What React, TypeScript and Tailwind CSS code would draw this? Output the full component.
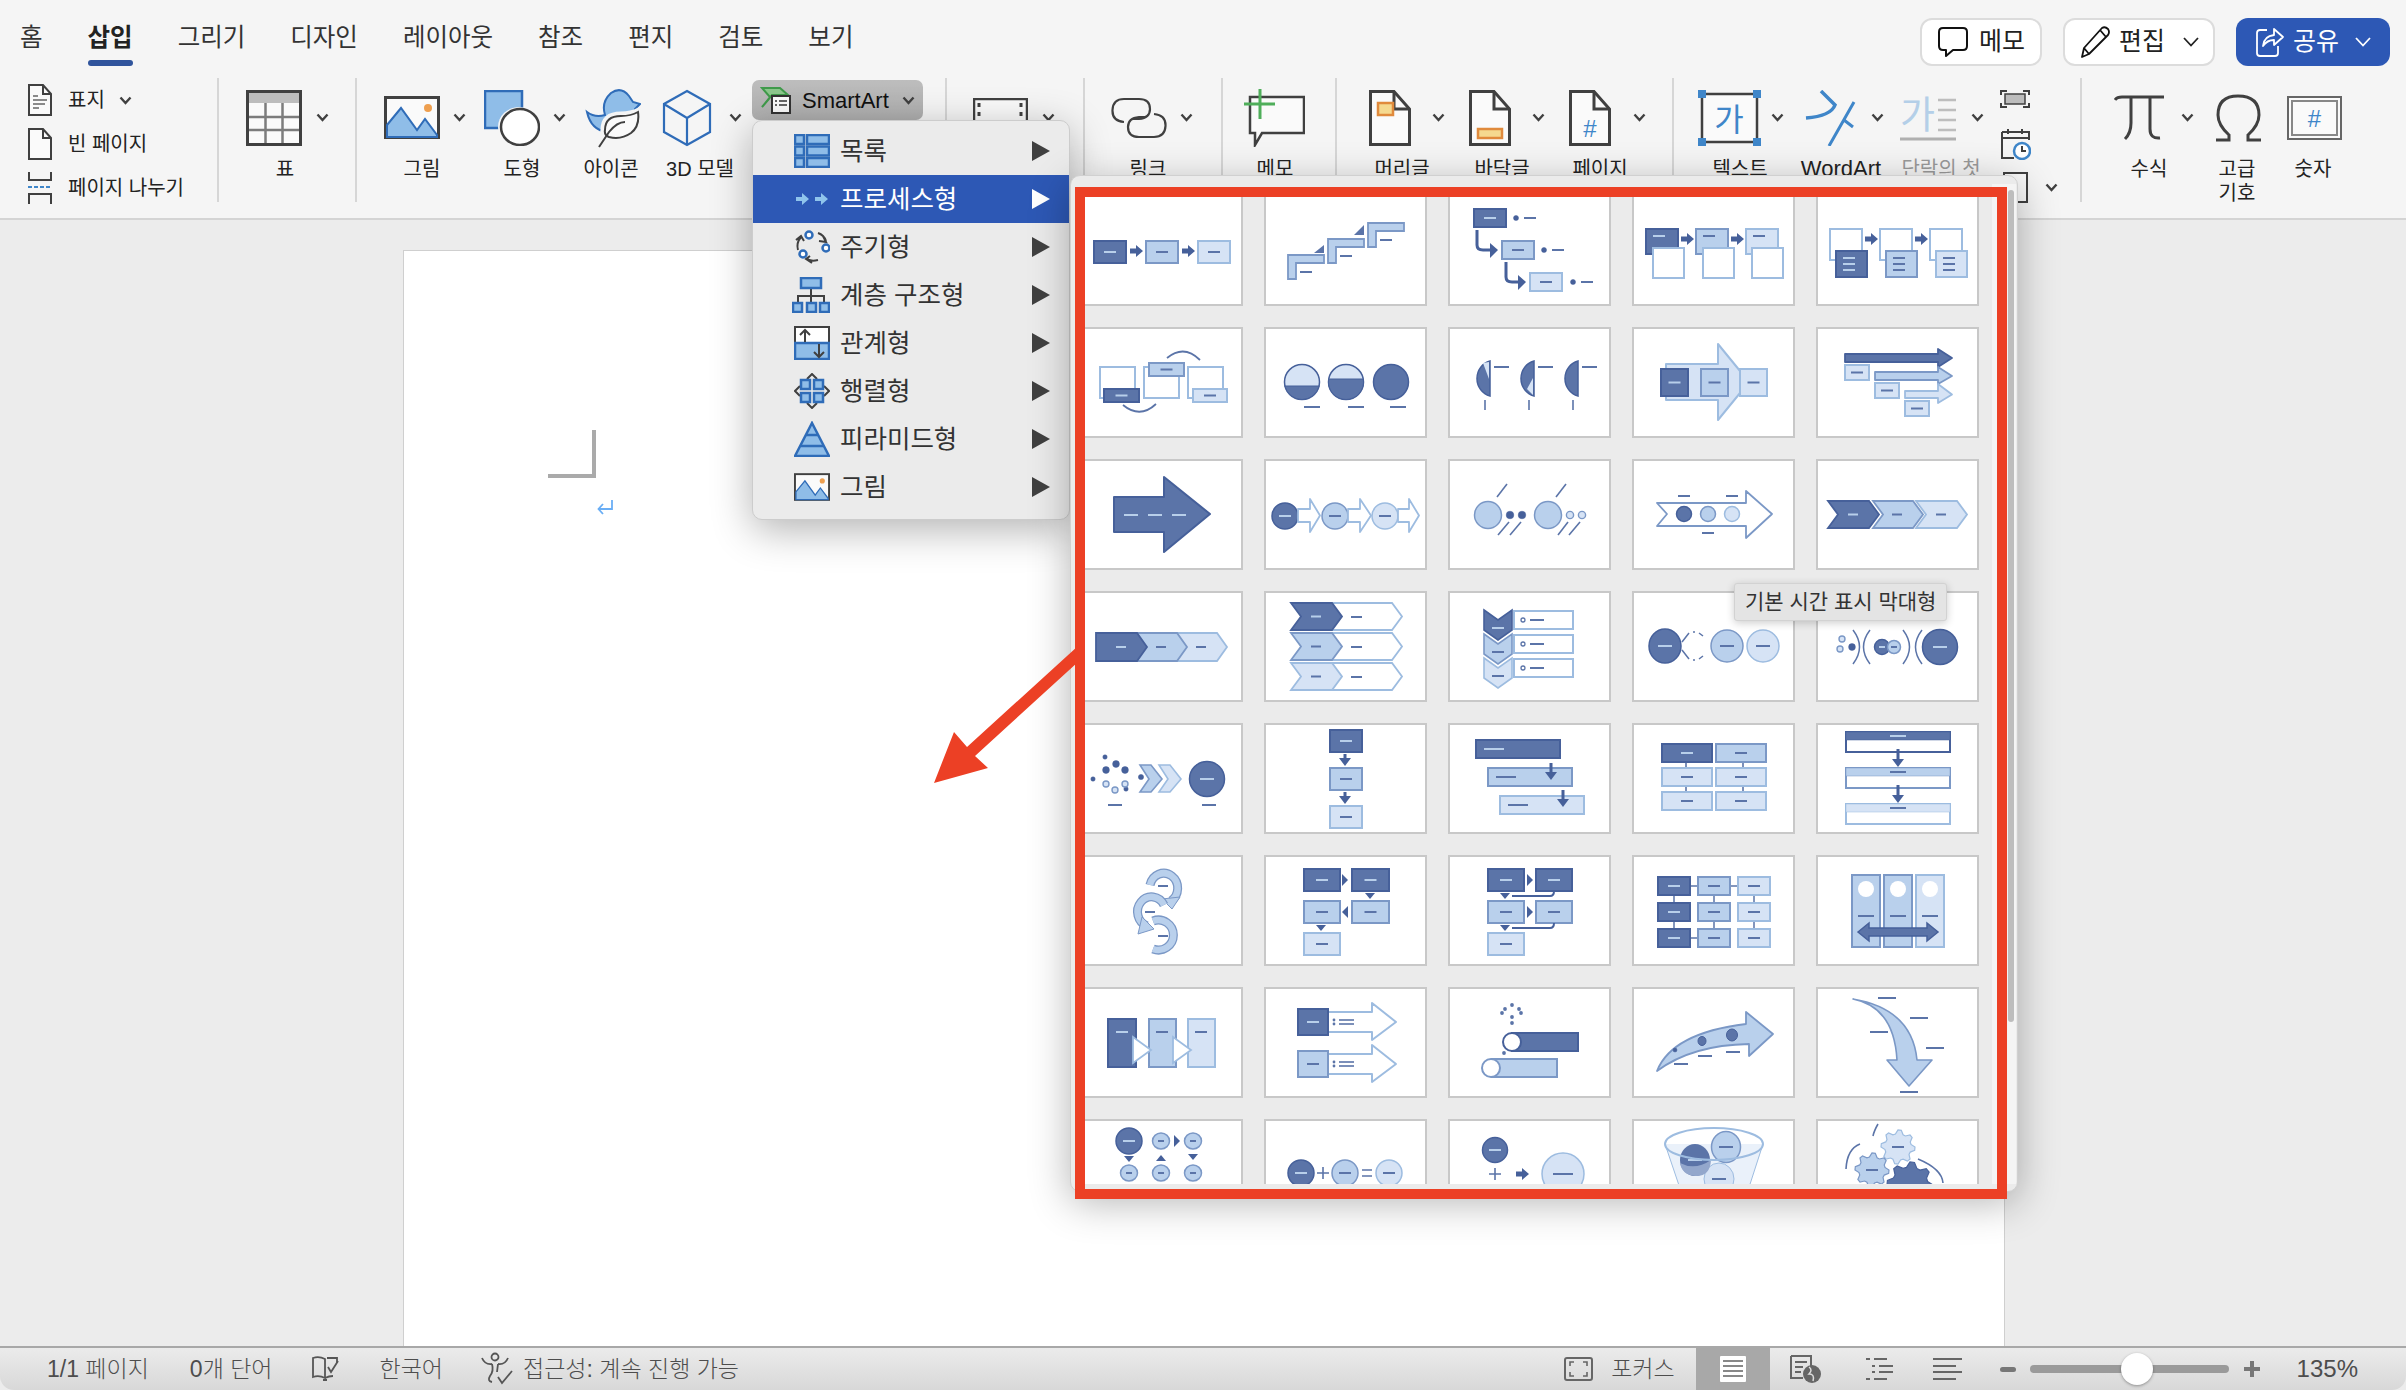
import type { ReactNode } from "react";

const KO = "font-['Liberation_Sans','Noto_Sans_CJK_KR',sans-serif]";

const TONE = [
  { f: "#5b74a8", s: "#46609a", d: "#b8cfea" },
  { f: "#b9d0ec", s: "#7b98c6", d: "#5b74a8" },
  { f: "#d6e3f5", s: "#9dbce0", d: "#5b74a8" },
];
const DARK = "#46609a";
const LINE = "#5b74a8";

const Dash = ({ x, y, w = 12, c = LINE }: { x: number; y: number; w?: number; c?: string }) => (
  <line x1={x} y1={y} x2={x + w} y2={y} stroke={c} strokeWidth="2" />
);

const Box = ({ x, y, w, h, t, dash = true, white = false }: { x: number; y: number; w: number; h: number; t: number; dash?: boolean; white?: boolean }) => (
  <g>
    <rect x={x} y={y} width={w} height={h} fill={white ? "#fff" : TONE[t].f} stroke={TONE[t].s} strokeWidth="2" />
    {dash && <Dash x={x + w / 2 - 6} y={y + h / 2} c={TONE[t].d} />}
  </g>
);

const Ell = ({ cx, cy, r, ry, t, dash = true, w = 12 }: { cx: number; cy: number; r: number; ry?: number; t: number; dash?: boolean; w?: number }) => (
  <g>
    <ellipse cx={cx} cy={cy} rx={r} ry={ry ?? r} fill={TONE[t].f} stroke={TONE[t].s} strokeWidth="1.5" />
    {dash && <Dash x={cx - w / 2} y={cy} w={w} c={TONE[t].d} />}
  </g>
);

const RA = ({ x, y }: { x: number; y: number }) => (
  <path d={`M${x} ${y + 2.5}H${x + 6}V${y - 1}L${x + 13} ${y + 5}L${x + 6} ${y + 11}V${y + 7.5}H${x}Z`} fill={DARK} />
);

const DA = ({ cx, y, h }: { cx: number; y: number; h: number }) => (
  <path d={`M${cx - 1.5} ${y}H${cx + 1.5}V${y + h - 8}H${cx + 6}L${cx} ${y + h}L${cx - 6} ${y + h - 8}H${cx - 1.5}Z`} fill={DARK} />
);

const Chev = ({ x, y, w, h, t, p = 10, notch = true, white = false, dash }: { x: number; y: number; w: number; h: number; t: number; p?: number; notch?: boolean; white?: boolean; dash?: number }) => (
  <g>
    <polygon
      points={`${x},${y} ${x + w - p},${y} ${x + w},${y + h / 2} ${x + w - p},${y + h} ${x},${y + h}${notch ? ` ${x + p},${y + h / 2}` : ""}`}
      fill={white ? "#fff" : TONE[t].f}
      stroke={TONE[t].s}
      strokeWidth="1.8"
    />
    {dash !== undefined && <Dash x={dash} y={y + h / 2} w={10} c={TONE[t].d} />}
  </g>
);

// long block arrow: body y0..y1, head from hx out to tip
const Arr = ({ x, hx, tip, y0, y1, t0, t1, t, white = false, sw = 1.8 }: { x: number; hx: number; tip: number; y0: number; y1: number; t0: number; t1: number; t: number; white?: boolean; sw?: number }) => (
  <polygon
    points={`${x},${y0} ${hx},${y0} ${hx},${t0} ${tip},${(y0 + y1) / 2} ${hx},${t1} ${hx},${y1} ${x},${y1}`}
    fill={white ? "#fff" : TONE[t].f}
    stroke={TONE[t].s}
    strokeWidth={sw}
    strokeLinejoin="round"
  />
);

const seg = (cx: number, cy: number, r: number, yk: number) => {
  const dx = Math.sqrt(r * r - (yk - cy) * (yk - cy));
  return `M${cx - dx} ${yk}A${r} ${r} 0 ${yk < cy ? 1 : 0} 0 ${cx + dx} ${yk}Z`;
};

const Lstep = ({ x, y }: { x: number; y: number }) => (
  <path d={`M${x} ${y}H${x + 36}V${y + 8}H${x + 8}V${y + 24}H${x}Z`} fill={TONE[1].f} stroke={TONE[1].s} strokeWidth="1.8" />
);

const gear = (cx: number, cy: number, r: number, n: number) => {
  const pts: string[] = [];
  for (let i = 0; i < n * 4; i++) {
    const a = (i / (n * 4)) * Math.PI * 2;
    const rr = i % 4 < 2 ? r : r * 0.78;
    pts.push(`${cx + rr * Math.cos(a)},${cy + rr * Math.sin(a)}`);
  }
  return pts.join(" ");
};

const Dot = ({ x, y, r = 2.5, ring = false }: { x: number; y: number; r?: number; ring?: boolean }) => (
  <circle cx={x} cy={y} r={r} fill={ring ? TONE[2].f : DARK} stroke={ring ? TONE[1].s : DARK} strokeWidth={ring ? 1.4 : 0.5} />
);

const Tri = ({ x, y, dir }: { x: number; y: number; dir: "r" | "l" | "u" | "d" }) => {
  const p = {
    r: `${x - 3},${y - 6} ${x + 3},${y} ${x - 3},${y + 6}`,
    l: `${x + 3},${y - 6} ${x - 3},${y} ${x + 3},${y + 6}`,
    u: `${x - 5},${y + 3} ${x + 5},${y + 3} ${x},${y - 3}`,
    d: `${x - 5},${y - 3} ${x + 5},${y - 3} ${x},${y + 3}`,
  }[dir];
  return <polygon points={p} fill={DARK} />;
};

const Ring = ({ cx, cy, a }: { cx: number; cy: number; a: string }) => (
  <g fill="none">
    <path d={a} stroke={TONE[1].s} strokeWidth="9" />
    <path d={a} stroke={TONE[1].f} strokeWidth="6.5" />
    <Dash x={cx - 5} y={cy} w={10} />
  </g>
);

const THUMBS: ReactNode[] = [
  // row 1
  <><Box x={14} y={46} w={32} h={22} t={0} /><RA x={50} y={51} /><Box x={66} y={46} w={32} h={22} t={1} /><RA x={102} y={51} /><Box x={118} y={46} w={32} h={22} t={2} /></>,
  <><Lstep x={24} y={60} /><Lstep x={64} y={44} /><Lstep x={104} y={28} /><polygon points="60,50 60,58 50,58" fill={LINE} /><polygon points="100,30 100,40 90,40" fill={LINE} /><Dash x={36} y={77} /><Dash x={76} y={61} /><Dash x={116} y={45} /></>,
  <><Box x={26} y={14} w={32} h={18} t={0} /><Dot x={68} y={23} /><Dash x={76} y={23} /><Box x={54} y={46} w={32} h={18} t={1} /><Dot x={96} y={55} /><Dash x={104} y={55} /><Box x={82} y={78} w={32} h={18} t={2} /><Dot x={125} y={87} /><Dash x={133} y={87} /><path d="M29 35V50Q29 55 35 55H42" fill="none" stroke={DARK} strokeWidth="3" /><polygon points="42,48 50,55 42,63" fill={DARK} /><path d="M58 67V82Q58 87 64 87H70" fill="none" stroke={DARK} strokeWidth="3" /><polygon points="70,80 78,87 70,95" fill={DARK} /></>,
  <><Box x={14} y={34} w={32} h={25} t={0} dash={false} /><Box x={64} y={34} w={32} h={25} t={1} dash={false} /><Box x={114} y={34} w={32} h={25} t={2} dash={false} /><Box x={21} y={53} w={31} h={30} t={2} white dash={false} /><Box x={71} y={53} w={31} h={30} t={2} white dash={false} /><Box x={120} y={53} w={31} h={30} t={2} white dash={false} /><RA x={49} y={39} /><RA x={99} y={39} /><Dash x={21} y={41} c={TONE[0].d} /><Dash x={71} y={41} /><Dash x={121} y={41} /></>,
  <><Box x={14} y={34} w={32} h={31} t={2} white dash={false} /><Box x={64} y={34} w={32} h={31} t={2} white dash={false} /><Box x={114} y={34} w={32} h={31} t={2} white dash={false} /><RA x={49} y={39} /><RA x={99} y={39} />{[0, 1, 2].map((i) => <g key={i}><Box x={20 + i * 50} y={56} w={31} h={26} t={i} dash={false} />{[63, 69, 75].map((y) => <Dash key={y} x={27 + i * 50} y={y} c={TONE[i].d} />)}</g>)}</>,
  // row 2
  <><Box x={20} y={40} w={35} h={31} t={2} white dash={false} /><Box x={64} y={40} w={35} h={31} t={2} white dash={false} /><Box x={108} y={40} w={35} h={31} t={2} white dash={false} /><Box x={69} y={36} w={35} h={13} t={1} /><Box x={24} y={62} w={35} h={13} t={0} /><Box x={113} y={62} w={34} h={13} t={2} /><path d="M87 31Q104 17 120 33" fill="none" stroke={LINE} strokeWidth="1.8" /><path d="M43 78Q60 92 76 77" fill="none" stroke={LINE} strokeWidth="1.8" /></>,
  <>{[[38, 59], [82, 52]].map(([cx, k]) => <g key={cx}><circle cx={cx} cy={55} r={17.5} fill={TONE[2].f} stroke={TONE[0].s} strokeWidth="1.5" /><path d={seg(cx, 55, 17.5, k)} fill={TONE[0].f} stroke={TONE[0].s} strokeWidth="1" /></g>)}<circle cx={127} cy={55} r={17.5} fill={TONE[0].f} stroke={TONE[0].s} strokeWidth="1.5" /><Dash x={40} y={80} w={16} /><Dash x={84} y={80} w={16} /><Dash x={126} y={80} w={16} /></>,
  <>{[25, 69, 113].map((x, i) => <g key={x}><path d={`M${x + 17} 34A17 18 0 0 0 ${x + 17} 69Z`} fill={TONE[0].f} stroke={TONE[0].s} strokeWidth="1.5" />{i === 0 && <polygon points="35,36 41,35 41,52" fill={TONE[2].f} />}{i === 1 && <polygon points="85,68 85,51 79,62" fill={TONE[2].f} />}<Dash x={x + 21} y={40} w={15} /><line x1={x + 12} y1={73} x2={x + 12} y2={83} stroke={LINE} strokeWidth="1.6" /></g>)}</>,
  <><path d="M34 37H86V17L117 55L86 93V73H34Z" fill={TONE[2].f} stroke={TONE[2].s} strokeWidth="2" strokeLinejoin="round" /><Box x={29} y={42} w={27} h={27} t={0} /><Box x={69} y={42} w={27} h={27} t={1} /><Box x={108} y={42} w={27} h={27} t={2} /></>,
  <><Arr x={29} hx={122} tip={136} y0={27} y1={35} t0={22} t1={40} t={0} /><Box x={29} y={38} w={24} h={15} t={2} /><Arr x={59} hx={122} tip={136} y0={45} y1={53} t0={40} t1={57} t={1} /><Box x={59} y={56} w={24} h={15} t={2} /><Arr x={89} hx={122} tip={136} y0={64} y1={71} t0={57} t1={76} t={2} /><Box x={89} y={74} w={24} h={15} t={2} /></>,
  // row 3
  <><path d="M34 38H84V18L130 55L84 93V73H34Z" fill={TONE[0].f} stroke={TONE[0].s} strokeWidth="2" strokeLinejoin="round" /><Dash x={44} y={56} w={14} c={TONE[0].d} /><Dash x={68} y={56} w={14} c={TONE[0].d} /><Dash x={92} y={56} w={14} c={TONE[0].d} /></>,
  <><Ell cx={21} cy={57} r={13} t={0} /><Arr x={34} hx={46} tip={56} y0={50} y1={63} t0={40} t1={73} t={2} white /><Ell cx={71} cy={57} r={13} t={1} /><Arr x={84} hx={96} tip={107} y0={50} y1={63} t0={40} t1={73} t={2} white /><Ell cx={121} cy={57} r={13} t={2} /><Arr x={134} hx={145} tip={155} y0={50} y1={63} t0={40} t1={73} t={2} white /></>,
  <><Ell cx={40} cy={56} r={13.5} t={1} dash={false} /><Ell cx={100} cy={56} r={13.5} t={1} dash={false} /><Dot x={62} y={56} r={3.8} /><Dot x={74} y={56} r={3.8} /><Dot x={122} y={56} r={3.6} ring /><Dot x={134} y={56} r={3.6} ring /><g stroke={LINE} strokeWidth="1.6"><line x1={59} y1={25} x2={49} y2={38} /><line x1={118} y1={25} x2={108} y2={38} /><line x1={61} y1={63} x2={50} y2={76} /><line x1={73} y1={63} x2={62} y2={76} /><line x1={120} y1={63} x2={110} y2={76} /><line x1={132} y1={63} x2={121} y2={76} /></g></>,
  <><path d="M25 44H114V32L140 55L114 79V67H25L35 55Z" fill="#fff" stroke={TONE[1].s} strokeWidth="1.8" strokeLinejoin="round" /><Ell cx={52} cy={55} r={7.5} t={0} dash={false} /><Ell cx={76} cy={55} r={7.5} t={1} dash={false} /><Ell cx={100} cy={55} r={7.5} t={2} dash={false} /><Dash x={46} y={37} /><Dash x={94} y={37} /><Dash x={70} y={74} /></>,
  <><Chev x={100} y={42} w={51} h={27} t={2} dash={120} /><Chev x={57} y={42} w={50} h={27} t={1} dash={76} /><Chev x={12} y={42} w={51} h={27} t={0} dash={32} /></>,
  // row 4
  <><Chev x={96} y={42} w={51} h={28} t={2} notch={false} dash={116} /><Chev x={56} y={42} w={51} h={28} t={1} notch={false} dash={76} /><Chev x={16} y={42} w={51} h={28} t={0} notch={false} dash={36} /></>,
  <>{[12, 42, 72].map((y, i) => <g key={y}><Chev x={66} y={y} w={72} h={27} t={2} notch={false} white /><Chev x={27} y={y} w={51} h={27} t={i} dash={47} /><Dash x={87} y={y + 14} w={11} /></g>)}</>,
  <>{[[19, 37, 0], [43, 61, 1], [67, 85, 2]].map(([y, by, i]) => <g key={y}><polygon points={`36,${y} 50,${y + 10} 64,${y} 64,${y + 20} 50,${y + 30} 36,${y + 20}`} fill={TONE[i].f} stroke={TONE[i].s} strokeWidth="1.6" /><Dash x={44} y={by} c={TONE[i].d} /><rect x={66} y={by - 17} width={59} height={18} fill="#fff" stroke={TONE[2].s} strokeWidth="2" /><circle cx={75} cy={by - 8} r={2} fill="#fff" stroke={LINE} strokeWidth="1.3" /><Dash x={82} y={by - 8} w={14} /></g>)}</>,
  <><Ell cx={33} cy={55} r={16} ry={17} t={0} w={14} /><Ell cx={95} cy={55} r={16} t={1} w={14} /><Ell cx={131} cy={55} r={16} t={2} w={14} /><path d="M50 51L57 42M50 59L57 68" stroke={LINE} strokeWidth="1.5" /><path d="M67 42L71 45M67 68L71 65" stroke={LINE} strokeWidth="1.5" /><circle cx={62} cy={41} r={1} fill={LINE} /><circle cx={62} cy={69} r={1} fill={LINE} /></>,
  <><Dot x={26} y={48} r={3} ring /><Dot x={36} y={56} r={3.4} /><Dot x={24} y={58} r={3} ring /><g fill="none" stroke={LINE} strokeWidth="1.5"><path d="M37 39Q50 56 37 73" /><path d="M54 39Q41 56 54 73" /><path d="M87 39Q100 56 87 73" /><path d="M106 39Q93 56 106 73" /></g><Ell cx={66} cy={56} r={7.5} t={0} w={6} /><Ell cx={78} cy={56} r={6.5} t={1} w={6} /><Ell cx={124} cy={56} r={17.5} t={0} w={14} /></>,
  // row 5
  <>{[[25, 34, 2.2], [36, 41, 3.4], [26, 47, 3.4], [45, 47, 3.4], [13, 56, 2.2], [61, 54, 2.6], [46, 66, 2.2]].map(([x, y, r]) => <Dot key={`${x}${y}`} x={x} y={y} r={r} />)}{[[26, 61], [45, 61], [35, 67]].map(([x, y]) => <Dot key={`${x}${y}`} x={x} y={y} r={3} ring />)}<polygon points="60,42 71,42 82,56 71,69 60,69 69,56" fill={TONE[1].f} stroke={TONE[1].s} strokeWidth="1.6" /><polygon points="79,42 90,42 101,56 90,69 79,69 88,56" fill={TONE[2].f} stroke={TONE[2].s} strokeWidth="1.6" /><Ell cx={127} cy={56} r={17.5} t={0} w={14} /><Dash x={28} y={82} w={14} /><Dash x={122} y={82} w={14} /></>,
  <><Box x={66} y={7} w={32} h={22} t={0} /><DA cx={81} y={31} h={12} /><Box x={66} y={45} w={32} h={22} t={1} /><DA cx={81} y={69} h={12} /><Box x={66} y={83} w={32} h={22} t={2} /></>,
  <><rect x={28} y={17} width={84} height={18} fill={TONE[0].f} stroke={TONE[0].s} strokeWidth="2" /><Dash x={36} y={26} w={20} c={TONE[0].d} /><rect x={40} y={45} width={84} height={18} fill={TONE[1].f} stroke={TONE[1].s} strokeWidth="2" /><Dash x={48} y={54} w={20} /><rect x={52} y={73} width={84} height={18} fill={TONE[2].f} stroke={TONE[2].s} strokeWidth="2" /><Dash x={60} y={82} w={20} /><DA cx={103} y={40} h={17} /><DA cx={115} y={67} h={17} /></>,
  <><path d="M54 39V69M111 39V69" stroke={LINE} strokeWidth="1.6" /><Box x={30} y={21} w={50} h={18} t={0} /><Box x={84} y={21} w={50} h={18} t={1} /><Box x={30} y={45} w={50} h={18} t={2} /><Box x={84} y={45} w={50} h={18} t={2} /><Box x={30} y={69} w={50} h={18} t={2} /><Box x={84} y={69} w={50} h={18} t={2} /></>,
  <>{[[9, 0], [45, 1], [81, 2]].map(([y, i]) => <g key={y}><rect x={30} y={y} width={104} height={20} fill="#fff" stroke={TONE[i].s} strokeWidth="2" /><rect x={30} y={y} width={104} height={8} fill={TONE[i].f} stroke={TONE[i].s} strokeWidth="0.5" /><Dash x={74} y={y + 4} w={16} c={TONE[i].d} /></g>)}<DA cx={82} y={26} h={18} /><DA cx={82} y={62} h={18} /></>,
  // row 6
  <><Ring cx={83} cy={31} a="M70 30A14 15 0 1 1 91 46" /><polygon points="82,44 100,42 92,54" fill={TONE[1].f} stroke={TONE[1].s} /><Ring cx={70} cy={57} a="M84 50A14 15 0 1 0 67 71" /><polygon points="62,62 58,79 74,74" fill={TONE[1].f} stroke={TONE[1].s} /><Ring cx={83} cy={81} a="M73 66A15 15 0 1 1 73 94" /></>,
  <><Box x={40} y={14} w={36} h={22} t={0} /><Box x={88} y={14} w={37} h={22} t={0} /><Box x={40} y={46} w={36} h={22} t={1} /><Box x={88} y={46} w={37} h={22} t={1} /><Box x={40} y={78} w={36} h={22} t={2} /><Tri x={81} y={25} dir="r" /><Tri x={106} y={41} dir="d" /><Tri x={81} y={57} dir="l" /><Tri x={57} y={73} dir="d" /></>,
  <><Box x={40} y={14} w={36} h={22} t={0} /><Box x={88} y={14} w={36} h={22} t={0} /><Box x={40} y={46} w={36} h={22} t={1} /><Box x={88} y={46} w={36} h={22} t={1} /><Box x={40} y={78} w={36} h={22} t={2} /><Tri x={82} y={25} dir="r" /><Tri x={82} y={57} dir="r" /><Tri x={57} y={41} dir="d" /><Tri x={57} y={73} dir="d" /><path d="M64 41H102Q106 41 106 36M64 73H102Q106 73 106 68" fill="none" stroke={DARK} strokeWidth="2" /></>,
  <><path d="M42 40V74M82 40V74M122 40V74M58 31H106M58 83H66" stroke={LINE} strokeWidth="1.5" />{[0, 1, 2].map((i) => <g key={i}>{[22, 48, 74].map((y) => <Box key={y} x={26 + i * 40} y={y} w={32} h={18} t={i} />)}</g>)}</>,
  <>{[36, 68, 100].map((x, i) => <g key={x}><rect x={x} y={20} width={28} height={72} fill={TONE[i === 2 ? 2 : 1].f} stroke={TONE[i === 2 ? 2 : 1].s} strokeWidth="2" /><ellipse cx={x + 14} cy={34} rx={8} ry={8} fill="#fff" /><Dash x={x + 6} y={61} w={16} /></g>)}<path d="M42 77L53 68V73H111V68L122 77L111 86V81H53V86Z" fill={TONE[0].f} stroke={DARK} strokeWidth="1.5" /></>,
  // row 7
  <><Box x={28} y={32} w={28} h={48} t={0} dash={false} /><Dash x={36} y={45} c={TONE[0].d} /><Box x={69} y={32} w={27} h={48} t={1} dash={false} /><Dash x={76} y={45} /><Box x={108} y={32} w={27} h={48} t={2} dash={false} /><Dash x={115} y={45} /><polygon points="53,50 71,63 53,76" fill="#fff" stroke={TONE[2].s} strokeWidth="1.8" /><polygon points="93,50 111,63 93,76" fill="#fff" stroke={TONE[2].s} strokeWidth="1.8" /></>,
  <>{[[22, 0], [64, 1]].map(([y, i]) => <g key={y}><path d={`M64 ${y + 3}H108V${y - 6}L132 ${y + 13}L108 ${y + 31}V${y + 23}H64`} fill="#fff" stroke={TONE[2].s} strokeWidth="2" strokeLinejoin="round" /><Box x={34} y={y} w={30} h={26} t={i} /><circle cx={70} cy={y + 11} r={1.4} fill={LINE} /><circle cx={70} cy={y + 15} r={1.4} fill={LINE} /><line x1={75} y1={y + 11} x2={90} y2={y + 11} stroke={LINE} strokeWidth="1.6" /><line x1={75} y1={y + 15} x2={90} y2={y + 15} stroke={LINE} strokeWidth="1.6" /></g>)}</>,
  <>{[[64, 18], [57, 22], [71, 22], [54, 26], [73, 26], [64, 30], [64, 36], [56, 66]].map(([x, y]) => <circle key={`${x}${y}`} cx={x} cy={y} r={1.9} fill={LINE} />)}<rect x={64} y={46} width={66} height={18} fill={TONE[0].f} stroke={TONE[0].s} strokeWidth="2" /><ellipse cx={64} cy={55} rx={9} ry={9} fill="#fff" stroke={TONE[0].s} strokeWidth="2" /><rect x={44} y={72} width={65} height={18} fill={TONE[1].f} stroke={TONE[1].s} strokeWidth="2" /><ellipse cx={43} cy={81} rx={9} ry={9} fill="#fff" stroke={TONE[1].s} strokeWidth="2" /></>,
  <><path d="M25 84Q40 46 114 37V25L141 47L117 69V57Q60 58 25 84Z" fill={TONE[1].f} stroke={TONE[1].s} strokeWidth="1.8" strokeLinejoin="round" /><Dot x={43} y={63} r={2} /><ellipse cx={70} cy={54} rx={4} ry={4.5} fill={TONE[0].f} stroke={DARK} /><ellipse cx={100} cy={48} rx={5.5} ry={6} fill={TONE[0].f} stroke={DARK} /><Dash x={42} y={77} w={14} /><Dash x={66} y={69} w={14} /><Dash x={94} y={65} w={14} /></>,
  <><path d="M37 12Q78 20 81 73H71L93 99L116 73H101Q96 22 37 12Z" fill={TONE[1].f} stroke={TONE[1].s} strokeWidth="1.6" strokeLinejoin="round" /><Dash x={62} y={11} w={18} /><Dash x={94} y={31} w={18} /><Dash x={54} y={45} w={18} /><Dash x={110} y={61} w={18} /><Dash x={84} y={105} w={18} /></>,
  // row 8
  <><Ell cx={49} cy={22} r={13} t={0} /><Ell cx={81} cy={22} r={8.5} ry={8} t={1} w={6} /><Ell cx={113} cy={22} r={8.5} ry={8} t={1} w={6} /><Ell cx={49} cy={54} r={8.5} ry={8} t={1} w={6} /><Ell cx={81} cy={54} r={8.5} ry={8} t={1} w={6} /><Ell cx={113} cy={54} r={8.5} ry={8} t={1} w={6} /><Tri x={97} y={22} dir="r" /><Tri x={49} y={40} dir="d" /><Tri x={81} y={39} dir="u" /><Tri x={113} y={38} dir="d" /></>,
  <><Ell cx={37} cy={54} r={13} t={0} /><Ell cx={81} cy={54} r={13} t={1} /><Ell cx={125} cy={54} r={13} t={2} /><path d="M53 54H65M59 48V60M98 51H108M98 57H108" stroke={LINE} strokeWidth="1.6" /></>,
  <><Ell cx={47} cy={31} r={12.5} t={0} /><path d="M41 55H53M47 49V61" stroke={LINE} strokeWidth="1.6" /><RA x={68} y={50} /><Ell cx={115} cy={55} r={21} t={2} w={20} /></>,
  <><path d="M33 25L55 90H110L131 25" fill={TONE[2].f} fillOpacity="0.5" stroke={TONE[2].s} strokeWidth="1" /><ellipse cx={87} cy={60} rx={15} ry={16} fill={TONE[2].f} stroke={TONE[2].s} /><Dash x={80} y={60} w={14} /><ellipse cx={63} cy={41} rx={15} ry={16} fill={TONE[0].f} /><path d="M48 44Q63 52 79 41Q78 58 63 57Q50 56 48 44Z" fill="#93a7cc" /><Dash x={56} y={41} w={14} c={TONE[0].d} /><Ell cx={94} cy={28} r={14.5} ry={15.5} t={1} w={14} /><ellipse cx={82} cy={25} rx={49} ry={16} fill="none" stroke={TONE[2].s} strokeWidth="2" /></>,
  <><polygon points={gear(82, 28, 17, 8)} fill={TONE[2].f} stroke={TONE[2].s} strokeWidth="1.2" /><Dash x={76} y={28} /><polygon points={gear(56, 51, 17, 8)} fill={TONE[1].f} stroke={TONE[1].s} strokeWidth="1.2" /><Dash x={50} y={51} /><polygon points={gear(94, 66, 23, 8)} fill={TONE[0].f} stroke={TONE[0].s} strokeWidth="1.2" /><path d="M30 50Q31 30 44 25M62 5Q58 12 57 17M102 40Q126 50 127 64" fill="none" stroke={LINE} strokeWidth="1.6" /></>,
];

const Chevron = ({ className = "" }: { className?: string }) => (
  <svg width="13" height="9" viewBox="0 0 13 9" className={`shrink-0 ${className}`}>
    <path d="M1.5 1.5L6.5 7L11.5 1.5" fill="none" stroke="#404040" strokeWidth="2.4" />
  </svg>
);

const Sep = () => <div className="w-[2px] h-[124px] shrink-0 bg-[#d6d6d6]" />;

const RibbonItem = ({ w, pad, gap, icon, label, labelCls = "", chevron = true, latin = false, muted = false }: {
  w: string; pad: string; gap?: string; icon: ReactNode; label: ReactNode; labelCls?: string; chevron?: boolean; latin?: boolean; muted?: boolean;
}) => (
  <div className={`${w} shrink-0 flex flex-col`}>
    <div className={`${pad} h-[79px] flex items-center`}>
      {icon}
      {chevron && <Chevron className={gap} />}
    </div>
    <div className={`${labelCls} ${latin ? "text-[22px]" : "text-[20px]"} ${muted ? "text-[#9a9a9a]" : "text-[#222]"} leading-[24px] text-center`}>{label}</div>
  </div>
);

const DocIcon = ({ children }: { children?: ReactNode }) => (
  <svg width="42" height="56" viewBox="0 0 42 56" className="shrink-0">
    <path d="M1.5 1.5H25L40.5 19V54.5H1.5Z" fill="#fafafa" stroke="#404040" strokeWidth="3" />
    <path d="M25 1.5V19H40.5" fill="none" stroke="#404040" strokeWidth="3" />
    {children}
  </svg>
);

const PictureIcon = ({ size = "lg" }: { size?: "lg" | "sm" }) => (
  <svg width={size === "lg" ? 56 : 36} height={size === "lg" ? 43 : 28} viewBox="0 0 56 43" className="shrink-0">
    <rect x="1.5" y="1.5" width="53" height="40" fill="#fafafa" stroke="#404040" strokeWidth="3" />
    <path d="M3 29L17 12L33 34L41 23L53 39V41H3Z" fill="#8fbde8" stroke="#2f6cb8" strokeWidth="2" />
    <ellipse cx="44" cy="12" rx="4" ry="4" fill="#ee9f4f" />
  </svg>
);

const MENU: { label: string; icon: ReactNode }[] = [
  { label: "목록", icon: <svg width="36" height="34" viewBox="0 0 36 34"><g fill="#8fbde8" stroke="#2f6cb8" strokeWidth="2.5"><rect x="1" y="1" width="9" height="9" /><rect x="1" y="12.5" width="9" height="9" /><rect x="1" y="24" width="9" height="9" /><rect x="13" y="1" width="22" height="9" /><rect x="13" y="12.5" width="22" height="9" /><rect x="13" y="24" width="22" height="9" /></g></svg> },
  { label: "프로세스형", icon: <svg width="36" height="16" viewBox="0 0 36 16"><path d="M2 6H8V2L15 8L8 14V10H2ZM21 6H27V2L34 8L27 14V10H21Z" fill="#8fc4ec" /></svg> },
  { label: "주기형", icon: <svg width="36" height="34" viewBox="0 0 36 34"><g fill="none" stroke="#404040" strokeWidth="2"><path d="M24 3Q30 5 32 11M29 6L32 12L25 11" /><path d="M24 30Q16 32 12 28M16 26L12 29L18 33" /><path d="M4 20Q2 13 7 7M2 10L7 6L10 11" /></g><g fill="#fff" stroke="#2f6cb8" strokeWidth="2.5"><circle cx="15" cy="5" r="3.5" /><circle cx="32" cy="18" r="3.5" /><circle cx="9" cy="24" r="3.5" /></g></svg> },
  { label: "계층 구조형", icon: <svg width="38" height="36" viewBox="0 0 38 36" className="-ml-[2px]"><path d="M19 11V19M6 25V19H32V25M19 19V25" fill="none" stroke="#404040" strokeWidth="2" /><g fill="#8fbde8" stroke="#2f6cb8" strokeWidth="2.5"><rect x="9" y="1" width="20" height="10" /><rect x="1" y="26" width="9" height="9" /><rect x="15" y="26" width="9" height="9" /><rect x="28" y="26" width="9" height="9" /></g></svg> },
  { label: "관계형", icon: <svg width="36" height="34" viewBox="0 0 36 34"><rect x="1" y="1" width="34" height="16" fill="#fff" stroke="#404040" strokeWidth="2" /><rect x="1" y="17" width="34" height="16" fill="#8fbde8" stroke="#2f6cb8" strokeWidth="2.5" /><path d="M11 16V4M6 9L11 4L16 9M25 18V31M20 26L25 31L30 26" fill="none" stroke="#404040" strokeWidth="2" /></svg> },
  { label: "행렬형", icon: <svg width="36" height="36" viewBox="0 0 36 36"><path d="M13 6L18 1L23 6M13 30L18 35L23 30M6 13L1 18L6 23M30 13L35 18L30 23" fill="none" stroke="#404040" strokeWidth="2" /><g fill="#8fbde8" stroke="#2f6cb8" strokeWidth="2.5"><rect x="7" y="7" width="9" height="9" /><rect x="20" y="7" width="9" height="9" /><rect x="7" y="20" width="9" height="9" /><rect x="20" y="20" width="9" height="9" /></g></svg> },
  { label: "피라미드형", icon: <svg width="36" height="36" viewBox="0 0 36 36"><path d="M18 2L35 35H1Z" fill="#8fbde8" stroke="#2f6cb8" strokeWidth="2.5" /><path d="M12 14H24M7 25H29" stroke="#2f6cb8" strokeWidth="2.5" /></svg> },
  { label: "그림", icon: <PictureIcon size="sm" /> },
];

const Cell = ({ children }: { children: ReactNode }) => (
  <div className="h-[111px] bg-white border-2 border-[#c8c8c8]">
    <svg width="159" height="107" viewBox="2 2 159 107" className="block">{children}</svg>
  </div>
);

export default function App() {
  return (
    <div className={`${KO} relative w-[2406px] h-[1390px] overflow-hidden bg-[#ececec] text-[#222]`}>
      {/* tabs */}
      <div className="h-[70px] bg-[#f5f5f5] flex justify-between pl-[20px] pr-[16px]">
        <div className="flex gap-[45px] pt-[23px] text-[24.5px] leading-[30px] text-[#333]">
          <span>홈</span>
          <div className="flex flex-col">
            <span className="font-bold text-[#222]">삽입</span>
            <div className="mt-[7px] h-[6px] rounded-full bg-[#30549c]" />
          </div>
          <span>그리기</span>
          <span>디자인</span>
          <span>레이아웃</span>
          <span>참조</span>
          <span>편지</span>
          <span>검토</span>
          <span>보기</span>
        </div>
        <div className="flex gap-[21px] pt-[18px] text-[25px]">
          <button className="w-[122px] h-[48px] flex items-center justify-center gap-[10px] rounded-[12px] bg-white border-2 border-[#dcdcdc]">
            <svg width="32" height="32" viewBox="0 0 32 32"><path d="M6 2H26Q30 2 30 6V20Q30 24 26 24H16L9 30V24H6Q2 24 2 20V6Q2 2 6 2Z" fill="none" stroke="#111" strokeWidth="2" strokeLinejoin="round" /></svg>
            <span>메모</span>
          </button>
          <button className="w-[152px] h-[48px] flex items-center justify-center gap-[8px] rounded-[12px] bg-white border-2 border-[#dcdcdc]">
            <svg width="32" height="34" viewBox="0 0 32 34"><path d="M3 32L5 23L23 3Q26 1 29 4Q31 7 29 10L10 29ZM21 5L27 12M5 23L10 29" fill="none" stroke="#111" strokeWidth="1.8" strokeLinejoin="round" /></svg>
            <span>편집</span>
            <svg width="16" height="10" viewBox="0 0 16 10" className="ml-[10px]"><path d="M1 1L8 8.5L15 1" fill="none" stroke="#222" strokeWidth="1.8" /></svg>
          </button>
          <button className="w-[154px] h-[48px] flex items-center justify-center gap-[8px] rounded-[12px] bg-[#2d58b5] text-white">
            <svg width="30" height="32" viewBox="0 0 30 32"><path d="M12 4H5Q2 4 2 7V27Q2 30 5 30H20Q23 30 23 27V20M8 20Q9 10 19 9V3L28 11L19 19V14Q12 14 8 20Z" fill="none" stroke="#fff" strokeWidth="1.8" strokeLinejoin="round" /></svg>
            <span>공유</span>
            <svg width="16" height="10" viewBox="0 0 16 10" className="ml-[8px]"><path d="M1 1L8 8.5L15 1" fill="none" stroke="#fff" strokeWidth="1.8" /></svg>
          </button>
        </div>
      </div>

      {/* ribbon */}
      <div className="h-[150px] bg-[#f5f5f5] border-b-2 border-[#d4d4d4] flex pt-[8px]">
        <div className="w-[217px] shrink-0 flex flex-col pl-[28px] text-[20px]">
          <div className="h-[44px] flex items-center gap-[16px]">
            <svg width="24" height="32" viewBox="0 0 24 32"><path d="M1 1H15L23 10V31H1Z" fill="#fafafa" stroke="#404040" strokeWidth="2" /><path d="M15 1V10H23" fill="none" stroke="#404040" strokeWidth="2" /><path d="M5 12H10M5 16H19M5 20H17M5 24H11" stroke="#8a8a8a" strokeWidth="2" /></svg>
            <span>표지</span>
            <Chevron className="ml-[-2px]" />
          </div>
          <div className="h-[44px] flex items-center gap-[16px]">
            <svg width="24" height="32" viewBox="0 0 24 32"><path d="M1 1H15L23 10V31H1Z" fill="#fafafa" stroke="#404040" strokeWidth="2" /><path d="M15 1V10H23" fill="none" stroke="#404040" strokeWidth="2" /></svg>
            <span>빈 페이지</span>
          </div>
          <div className="h-[44px] flex items-center gap-[16px]">
            <svg width="24" height="32" viewBox="0 0 24 32"><path d="M1 0V8H23V0M1 32V22H23V32" fill="none" stroke="#404040" strokeWidth="2" /><path d="M0 15H24" stroke="#3f86c9" strokeWidth="2" strokeDasharray="4 2" /></svg>
            <span>페이지 나누기</span>
          </div>
        </div>
        <Sep />
        <RibbonItem
          w="w-[136px]" pad="pl-[27px]" gap="ml-[14px]" label="표" labelCls="pr-[4px]"
          icon={<svg width="56" height="56" viewBox="0 0 56 56" className="shrink-0"><rect x="1.5" y="1.5" width="53" height="53" fill="#fafafa" stroke="#404040" strokeWidth="3" /><rect x="3" y="3" width="50" height="10" fill="#bdbdbd" /><path d="M19.5 13V53M36.5 13V53M3 27H53M3 40H53" stroke="#7c7c7c" strokeWidth="2.5" /></svg>}
        />
        <Sep />
        <div className="w-[15px] shrink-0" />
        <RibbonItem w="w-[100px]" pad="pl-[12px]" gap="ml-[13px]" label="그림" icon={<PictureIcon />} />
        <RibbonItem
          w="w-[100px]" pad="pl-[12px]" gap="ml-[13px]" label="도형"
          icon={<svg width="56" height="56" viewBox="0 0 56 56" className="shrink-0"><rect x="1" y="1" width="37" height="37" fill="#8fbde8" stroke="#2f6cb8" strokeWidth="2.5" /><ellipse cx="35" cy="37" rx="21" ry="20" fill="#f5f5f5" /><ellipse cx="36" cy="37" rx="19" ry="18" fill="#fff" stroke="#404040" strokeWidth="2.5" /></svg>}
        />
        <RibbonItem
          w="w-[78px]" pad="pl-[13px]" chevron={false} label="아이콘"
          icon={<svg width="56" height="60" viewBox="0 0 56 60" className="shrink-0"><path d="M2 24Q10 30 20 27Q16 14 26 5Q36 -2 44 8L48 14L55 16L50 21Q50 32 42 38Q36 44 22 44Q6 42 2 24Z" fill="#8fbde8" stroke="#2f6cb8" strokeWidth="2" /><path d="M18 42Q18 26 36 26Q46 26 54 22Q56 38 46 46Q36 54 22 50Q17 47 18 42Z" fill="#f5f5f5" stroke="#f5f5f5" strokeWidth="5" /><path d="M20 42Q20 28 36 28Q46 28 53 24Q55 38 46 45Q36 52 24 49Q19 47 20 42Z" fill="#fafafa" stroke="#404040" strokeWidth="2" /><path d="M14 59L24 44Q32 34 40 34" fill="none" stroke="#404040" strokeWidth="2" /></svg>}
        />
        <RibbonItem
          w="w-[100px]" pad="pl-[12px]" gap="ml-[17px]" label="3D 모델"
          icon={<svg width="50" height="58" viewBox="0 0 50 58" className="shrink-0"><path d="M25 2L48 15V43L25 56L2 43V15ZM2 15L25 29M48 15L25 29M25 29V56" fill="none" stroke="#2f6cb8" strokeWidth="2.2" /></svg>}
        />
        <div className="w-[195px] shrink-0 pl-[2px] pt-[2px]">
          <div className="w-[171px] h-[40px] flex items-center rounded-[7px] bg-gradient-to-b from-[#bdbdbd] to-[#aeaeae] pl-[8px]">
            <svg width="32" height="30" viewBox="0 0 32 30" className="shrink-0"><path d="M2 3H20L28 10H12L8 15L2 22L10 12Z" fill="#8cc68c" stroke="#3f9a4a" strokeWidth="2" /><rect x="12" y="11" width="18" height="17" fill="#fafafa" stroke="#333" strokeWidth="2" /><path d="M15 16H17M19 16H27M15 20H17M19 20H27" stroke="#333" strokeWidth="1.6" /></svg>
            <span className="ml-[10px] text-[22px] text-[#111]">SmartArt</span>
            <Chevron className="ml-[13px]" />
          </div>
        </div>
        <Sep />
        <RibbonItem
          w="w-[136px]" pad="pl-[26px]" gap="ml-[14px]" label="비디오"
          icon={<svg width="55" height="40" viewBox="0 0 55 40" className="shrink-0"><rect x="1" y="1" width="53" height="38" fill="#fafafa" stroke="#404040" strokeWidth="2.5" /><path d="M6 5V9M6 14V18M6 23V27M48 5V9M48 14V18" stroke="#404040" strokeWidth="3" /><circle cx="44" cy="36" r="7" fill="#3f86c9" /></svg>}
        />
        <Sep />
        <RibbonItem
          w="w-[136px]" pad="pl-[26px]" gap="ml-[13px]" label="링크" labelCls="pr-[10px]"
          icon={<svg width="56" height="42" viewBox="0 0 56 42" className="shrink-0"><g fill="none" stroke="#404040" strokeWidth="2.2"><path d="M13 25Q1 24 1.5 13Q2 2 13 2H28Q39 2 39 12Q39 21 28 22H22" /><path d="M43 17Q55 18 54.5 29Q54 40 43 40H28Q17 40 17 30Q17 21 28 20H34" /></g></svg>}
        />
        <Sep />
        <RibbonItem
          w="w-[112px]" pad="pl-[21px]" chevron={false} label="메모" labelCls="pr-[8px]"
          icon={<svg width="61" height="58" viewBox="0 0 61 58" className="shrink-0"><path d="M6 8H60V44H18L11 56V44H6Z" fill="#fafafa" stroke="#404040" strokeWidth="2.5" /><path d="M16 0V30M0 15H31" stroke="#4fae5a" strokeWidth="3" /></svg>}
        />
        <Sep />
        <RibbonItem w="w-[130px]" pad="pl-[32px]" gap="ml-[21px]" label="머리글" icon={<DocIcon><rect x="9" y="13" width="15" height="12" fill="#f5d98f" stroke="#e08a3c" strokeWidth="2.5" /></DocIcon>} />
        <RibbonItem w="w-[100px]" pad="pl-[2px]" gap="ml-[21px]" label="바닥글" labelCls="pr-[30px]" icon={<DocIcon><rect x="9" y="39" width="24" height="9" fill="#f5d98f" stroke="#e08a3c" strokeWidth="2.5" /></DocIcon>} />
        <RibbonItem
          w="w-[105px]" pad="pl-[2px]" gap="ml-[22px]" label="페이지" labelCls="pr-[39px]"
          icon={<DocIcon><text x="21" y="47" textAnchor="middle" fontSize="24" fill="#3f86c9">#</text></DocIcon>}
        />
        <Sep />
        <RibbonItem
          w="w-[116px]" pad="pl-[24px]" gap="ml-[10px]" label="텍스트" labelCls="pl-[16px]"
          icon={<svg width="63" height="56" viewBox="0 0 63 56" className="shrink-0"><rect x="4" y="4" width="55" height="48" fill="#fafafa" stroke="#404040" strokeWidth="2.5" /><g fill="#3f86c9"><rect x="0" y="0" width="8" height="8" /><rect x="55" y="0" width="8" height="8" /><rect x="0" y="48" width="8" height="8" /><rect x="55" y="48" width="8" height="8" /></g><text x="31" y="41" textAnchor="middle" fontSize="32" fill="#3f86c9">가</text></svg>}
        />
        <RibbonItem
          w="w-[102px]" pad="pl-[15px]" gap="ml-[11px]" label="WordArt" latin
          icon={<svg width="55" height="56" viewBox="0 0 55 56" className="shrink-0"><path d="M16 1L30 15Q26 26 1 28" fill="none" stroke="#3f86c9" strokeWidth="3.5" /><path d="M49 12L24 56M39 30L48 37" fill="none" stroke="#3f86c9" strokeWidth="3" /></svg>}
        />
        <RibbonItem
          w="w-[98px]" pad="pl-[8px]" gap="ml-[13px]" label="단락의 첫" muted
          icon={<svg width="58" height="52" viewBox="0 0 58 52" className="shrink-0"><text x="0" y="36" fontSize="38" fill="#b4cfe8">가</text><path d="M38 8H56M38 18H56M38 28H56M38 38H56" stroke="#bdbdbd" strokeWidth="2.5" /><path d="M0 47H56" stroke="#b0b0b0" strokeWidth="3" /></svg>}
        />
        <div className="w-[90px] shrink-0 flex flex-col pl-[10px]">
          <svg width="30" height="18" viewBox="0 0 30 18" className="mt-[12px]"><path d="M1 5V1H7M23 1H29V5M1 13V17H7M23 17H29V13" fill="none" stroke="#404040" strokeWidth="2" /><rect x="5" y="4" width="20" height="10" fill="#bdbdbd" stroke="#404040" strokeWidth="1.5" /></svg>
          <svg width="31" height="32" viewBox="0 0 31 32" className="mt-[20px]"><path d="M2 4H29V12M2 4V30H14" fill="none" stroke="#404040" strokeWidth="2" /><path d="M8 1V6M22 1V6M2 10H29" stroke="#404040" strokeWidth="2" /><circle cx="22" cy="23" r="8" fill="#fff" stroke="#3f86c9" strokeWidth="2.5" /><path d="M22 18V23H26" fill="none" stroke="#404040" strokeWidth="2" /></svg>
          <div className="mt-[12px] flex items-center">
            <svg width="25" height="31" viewBox="0 0 25 31" className="ml-[3px]"><path d="M1 1H24V30H1Z" fill="#fafafa" stroke="#404040" strokeWidth="2" /></svg>
            <Chevron className="ml-[17px]" />
          </div>
        </div>
        <Sep />
        <RibbonItem
          w="w-[128px]" pad="pl-[32px]" gap="ml-[16px]" label="수식" labelCls="pl-[6px]"
          icon={<svg width="51" height="46" viewBox="0 0 51 46" className="shrink-0"><path d="M1 5Q3 2 8 2H50M17 2V28Q17 38 11 44M36 2V34Q36 44 46 43" fill="none" stroke="#404040" strokeWidth="3" /></svg>}
        />
        <RibbonItem
          w="w-[60px]" pad="pl-[5px]" chevron={false} label={<>고급<br />기호</>} labelCls="pr-[6px]"
          icon={<svg width="47" height="48" viewBox="0 0 47 48" className="shrink-0"><path d="M1 46H14V41Q3 31 3 21Q3 2 23 2Q44 2 44 21Q44 31 33 41V46H46" fill="none" stroke="#404040" strokeWidth="3" /></svg>}
        />
        <RibbonItem
          w="w-[86px]" pad="pl-[17px]" chevron={false} label="숫자"
          icon={<svg width="55" height="44" viewBox="0 0 55 44" className="shrink-0"><rect x="1" y="1" width="53" height="42" fill="#fafafa" stroke="#666" strokeWidth="2" /><rect x="5" y="5" width="45" height="34" fill="#fafafa" stroke="#888" strokeWidth="2" /><text x="27.5" y="31" textAnchor="middle" fontSize="24" fill="#3f86c9">#</text></svg>}
        />
      </div>

      {/* document */}
      <div className="h-[1126px] pl-[403px] pt-[30px]">
        <div className="w-[1602px] h-[1096px] bg-white border-x border-t border-[#cfcfcf] pl-[144px] pt-[179px]">
          <div className="w-[48px] h-[48px] border-r-4 border-b-4 border-[#aaaaaa]" />
          <svg width="16" height="16" viewBox="0 0 16 16" className="ml-[49px] mt-[21px]"><path d="M15 1V10H2M6 5L1.5 10L6 15" fill="none" stroke="#6aaef5" strokeWidth="1.8" /></svg>
        </div>
      </div>

      {/* status bar */}
      <div className="absolute left-0 right-0 bottom-0 h-[44px] rounded-b-[14px] border-t-2 border-[#a8a8a8] bg-gradient-to-b from-[#ebebeb] to-[#d8d8d8] flex items-center pl-[47px] pr-[48px] text-[23px] text-[#4d4d4d] font-light">
        <span>1/1 페이지</span>
        <span className="ml-[41px]">0개 단어</span>
        <svg width="28" height="28" viewBox="0 0 28 28" className="ml-[38px]"><path d="M14 4Q8 1 2 3V22Q8 20 14 23V4ZM14 23Q18 21 22 21" fill="none" stroke="#555" strokeWidth="1.8" /><path d="M16 3H26V8M12 25H16" fill="none" stroke="#555" strokeWidth="1.8" /><path d="M17 12L20 17L27 6" fill="none" stroke="#555" strokeWidth="1.8" /></svg>
        <span className="ml-[41px]">한국어</span>
        <svg width="32" height="34" viewBox="0 0 32 34" className="ml-[38px]"><circle cx="14" cy="5" r="3.5" fill="none" stroke="#555" strokeWidth="1.8" /><path d="M1 6Q4 13 11 12M27 6Q24 13 17 12M11 12Q13 19 9 24Q6 29 11 30M17 12L16 20" fill="none" stroke="#555" strokeWidth="1.8" /><path d="M17 25L21 31L31 19" fill="none" stroke="#555" strokeWidth="1.8" /></svg>
        <span className="ml-[10px]">접근성: 계속 진행 가능</span>

        <svg width="29" height="24" viewBox="0 0 29 24" className="ml-auto"><rect x="1" y="1" width="27" height="22" rx="2" fill="none" stroke="#666" strokeWidth="2" /><path d="M6 9V5H10M23 9V5H19M6 15V19H10M23 15V19H19" fill="none" stroke="#666" strokeWidth="1.6" /></svg>
        <span className="ml-[18px]">포커스</span>
        <div className="ml-[21px] w-[74px] h-[42px] bg-[#a8a8a8] flex items-center justify-center">
          <svg width="26" height="26" viewBox="0 0 26 26"><rect width="26" height="26" rx="1" fill="#fff" /><path d="M3 5H23M3 10H23M3 15H23M3 20H23" stroke="#888" strokeWidth="2" /></svg>
        </div>
        <svg width="33" height="28" viewBox="0 0 33 28" className="ml-[19px]"><path d="M2 1H22V12M2 1V23H14" fill="none" stroke="#666" strokeWidth="2" /><path d="M6 7H18M6 12H14M6 17H12" stroke="#666" strokeWidth="2" /><circle cx="23" cy="19" r="9" fill="#666" /><path d="M20 12Q24 15 20 19Q26 19 24 26" fill="none" stroke="#ddd" strokeWidth="1.5" /></svg>
        <svg width="30" height="24" viewBox="0 0 30 24" className="ml-[41px]"><path d="M3 2H7M11 2H24M9 9H12M16 9H30M9 15H12M16 15H30M3 22H7M11 22H24" stroke="#666" strokeWidth="2" /></svg>
        <svg width="29" height="24" viewBox="0 0 29 24" className="ml-[40px]"><path d="M0 2H29M0 9H23M0 15H29M0 22H23" stroke="#666" strokeWidth="2" /></svg>
        <div className="ml-[38px] w-[16px] h-[5px] rounded-sm bg-[#777]" />
        <div className="ml-[14px] relative w-[199px] h-[8px] rounded-full bg-[#9a9a9a]">
          <div className="absolute left-[91px] -top-[12px] w-[32px] h-[32px] rounded-full bg-white shadow-[0_1px_3px_rgba(0,0,0,0.35)]" />
        </div>
        <svg width="16" height="16" viewBox="0 0 16 16" className="ml-[15px]"><path d="M0 8H16M8 0V16" stroke="#777" strokeWidth="4" /></svg>
        <span className="ml-[37px] text-[24px]">135%</span>
      </div>

      {/* SmartArt menu */}
      <div className="absolute left-[752px] top-[120px] w-[318px] h-[400px] rounded-[10px] bg-[#ebebeb] border border-[#cccccc] py-[6px] shadow-[0_10px_40px_rgba(0,0,0,0.3)] z-10">
        {MENU.map((m, i) => (
          <div key={m.label} className={`h-[48px] flex items-center pl-[41px] pr-[19px] ${i === 1 ? "bg-[#2d58b5] text-white" : "text-[#333]"}`}>
            <div className="w-[36px] flex justify-center">{m.icon}</div>
            <span className="ml-[10px] text-[25.5px]">{m.label}</span>
            <svg width="18" height="20" viewBox="0 0 18 20" className="ml-auto"><polygon points="0,0 18,10 0,20" fill={i === 1 ? "#fff" : "#404040"} /></svg>
          </div>
        ))}
      </div>

      {/* layout gallery */}
      <div className="absolute left-[1070px] top-[175px] w-[948px] h-[1017px] rounded-[10px] bg-[#ebebeb] border border-[#d0d0d0] shadow-[0_10px_40px_rgba(0,0,0,0.3)] z-20">
        <div className="h-[1008px] overflow-hidden pt-[19px] pl-[9px]">
          <div className="grid grid-cols-[repeat(5,163px)] auto-rows-[111px] gap-[21px]">
            {THUMBS.map((t, i) => (
              <Cell key={i}>{t}</Cell>
            ))}
          </div>
        </div>
        <div className="absolute left-[921px] top-[8px] w-[24px] h-[1000px] bg-[#f4f4f4]">
          <div className="ml-[16px] mt-[6px] w-[6px] h-[832px] rounded-full bg-[#bdbdbd]" />
        </div>
        <div className="absolute left-[4px] top-[11px] w-[932px] h-[1012px] border-[10px] border-[#ec4025]" />
        <div className="absolute left-[663px] top-[407px] px-[10px] h-[38px] flex items-center rounded-[3px] bg-[#e4e4e4] border border-[#d2d2d2] text-[21px] text-[#333] whitespace-nowrap shadow-[0_2px_8px_rgba(0,0,0,0.2)]">
          기본 시간 표시 막대형
        </div>
      </div>

      {/* annotation arrow */}
      <svg width="160" height="150" viewBox="930 640 160 150" className="absolute left-[930px] top-[640px] z-20">
        <polygon points="1078,646 1078,662 975,756 988,768 934,783 954,732 967,747" fill="#ec4025" />
      </svg>
    </div>
  );
}
